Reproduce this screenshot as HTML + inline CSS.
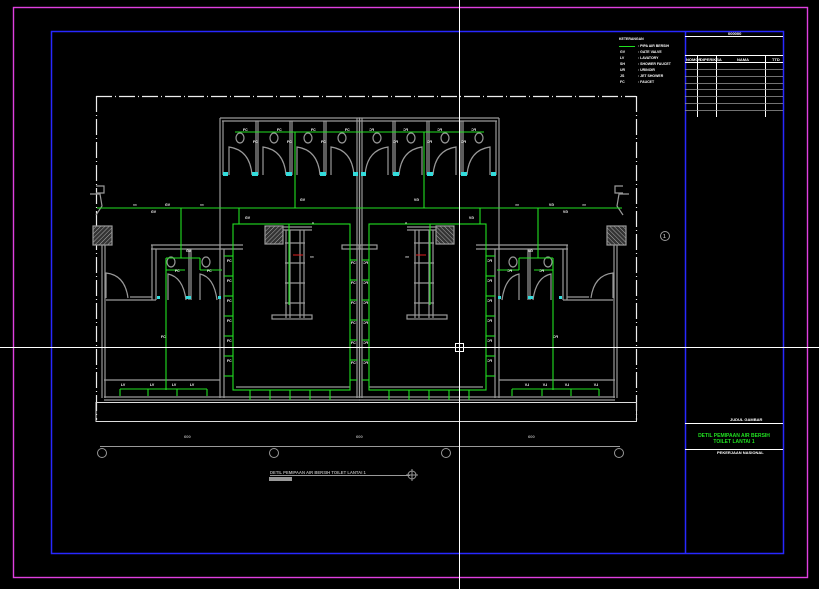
<!DOCTYPE html>
<html><head><meta charset="utf-8"><style>
html,body{margin:0;padding:0;background:#000;width:819px;height:589px;overflow:hidden}
svg{display:block}
text{font-family:"Liberation Sans",sans-serif;font-weight:bold}
</style></head><body>
<svg width="819" height="589" viewBox="0 0 819 589" xmlns="http://www.w3.org/2000/svg">
<defs>
<pattern id="hat" width="3" height="3" patternUnits="userSpaceOnUse" patternTransform="rotate(45)">
<rect width="3" height="3" fill="#333"/><line x1="0" y1="0" x2="0" y2="3" stroke="#aaa" stroke-width="1"/>
</pattern>
</defs>
<rect width="819" height="589" fill="#000"/>
<rect x="13.5" y="7.5" width="794" height="570" fill="none" stroke="#e040e0" stroke-width="1.4"/>
<rect x="51.5" y="31.5" width="732" height="522" fill="none" stroke="#2828ff" stroke-width="1.5"/>
<line x1="685.5" y1="31" x2="685.5" y2="553" stroke="#2828ff" stroke-width="1.5"/>

<g stroke="#fff" stroke-width="1">
<line x1="685" y1="36.5" x2="783" y2="36.5"/>
<line x1="685" y1="55.5" x2="783" y2="55.5"/>
<line x1="685" y1="62.5" x2="783" y2="62.5"/>
<line x1="697.5" y1="55" x2="697.5" y2="117"/>
<line x1="716.5" y1="55" x2="716.5" y2="117"/>
<line x1="765.5" y1="55" x2="765.5" y2="117"/>
<line x1="685" y1="423.5" x2="783" y2="423.5"/>
<line x1="685" y1="449.5" x2="783" y2="449.5"/>
</g>
<g stroke="#999" stroke-width="0.8">
<line x1="685" y1="69.5" x2="783" y2="69.5"/><line x1="685" y1="76.5" x2="783" y2="76.5"/>
<line x1="685" y1="83.5" x2="783" y2="83.5"/><line x1="685" y1="89.5" x2="783" y2="89.5"/>
<line x1="685" y1="96.5" x2="783" y2="96.5"/><line x1="685" y1="103.5" x2="783" y2="103.5"/>
<line x1="685" y1="110.5" x2="783" y2="110.5"/>
</g>
<g fill="#fff" font-size="4">
<text x="728" y="35">000000</text>
<text x="686" y="61">NOMOR</text><text x="700" y="61">DIPERIKSA</text><text x="737" y="61">NAMA</text><text x="772" y="61">TTD</text>
<text x="730" y="421">JUDUL GAMBAR</text>
<text x="717" y="454">PEKERJAAN NASIONAL</text>
</g>
<g fill="#20e020" font-size="5" font-weight="normal">
<text x="734" y="437" text-anchor="middle">DETIL PEMIPAAN AIR BERSIH</text>
<text x="734" y="443" text-anchor="middle">TOILET LANTAI 1</text>
</g>
<g fill="#fff" font-size="3.5">
<text x="619" y="40">KETERANGAN</text>
<line x1="619" y1="46.5" x2="635" y2="46.5" stroke="#20e020" stroke-width="1"/>
<text x="638" y="47">:  PIPA AIR BERSIH</text>
<text x="620" y="53">GV</text><text x="638" y="53">:  GATE VALVE</text>
<text x="620" y="59">LV</text><text x="638" y="59">:  LAVATORY</text>
<text x="620" y="65">SH</text><text x="638" y="65">:  SHOWER FAUCET</text>
<text x="620" y="71">UR</text><text x="638" y="71">:  URINOIR</text>
<text x="620" y="77">JS</text><text x="638" y="77">:  JET SHOWER</text>
<text x="620" y="83">FC</text><text x="638" y="83">:  FAUCET</text>
</g>

<g fill="none" stroke="#eee" stroke-width="1.2" stroke-dasharray="16,3,1,3">
<line x1="96" y1="96.5" x2="636" y2="96.5"/>
<line x1="96.5" y1="96" x2="96.5" y2="420"/>
<line x1="636.5" y1="96" x2="636.5" y2="420"/>
</g>
<g stroke="#ddd" stroke-width="1" fill="none">
<line x1="96" y1="402.5" x2="636" y2="402.5"/>
<line x1="96" y1="421.5" x2="636" y2="421.5"/>
<line x1="96" y1="402" x2="96" y2="422"/><line x1="636.5" y1="402" x2="636.5" y2="422"/>
</g>

<defs>
<g id="half">
 <g stroke="#999" stroke-width="1.2" fill="none">
  <line x1="220" y1="118" x2="360" y2="118"/><line x1="222" y1="121" x2="360" y2="121"/>
  <line x1="220" y1="118" x2="220" y2="250"/><line x1="223" y1="121" x2="223" y2="175"/>
  <line x1="256" y1="121" x2="256" y2="175"/><line x1="258" y1="121" x2="258" y2="175"/>
  <line x1="290" y1="121" x2="290" y2="175"/><line x1="292" y1="121" x2="292" y2="175"/>
  <line x1="324" y1="121" x2="324" y2="175"/><line x1="326" y1="121" x2="326" y2="175"/>
  <line x1="357" y1="118" x2="357" y2="398"/><line x1="359.5" y1="118" x2="359.5" y2="398"/>
  <path d="M229 175 L229 147 Q250 150 252 175"/><path d="M263 175 L263 147 Q284 150 286 175"/>
  <path d="M297 175 L297 147 Q318 150 320 175"/><path d="M331 175 L331 147 Q352 150 354 175"/>
  <ellipse cx="240" cy="138" rx="4" ry="5"/><ellipse cx="274" cy="138" rx="4" ry="5"/>
  <ellipse cx="308" cy="138" rx="4" ry="5"/><ellipse cx="342" cy="138" rx="4" ry="5"/>
  <rect x="93" y="226" width="19" height="19" fill="url(#hat)" stroke="#999"/>
  <line x1="102" y1="245" x2="102" y2="398"/><line x1="105" y1="245" x2="105" y2="398"/>
  <path d="M96 186 L104 186 L104 193 L96 193"/><path d="M90 194 L100 194 L102 206 L96 215"/>
  <line x1="151" y1="245" x2="243" y2="245"/><line x1="151" y1="249" x2="243" y2="249"/>
  <line x1="152" y1="245" x2="152" y2="300"/><line x1="156" y1="249" x2="156" y2="300"/>
  <line x1="106" y1="300" x2="156" y2="300"/><line x1="130" y1="297" x2="152" y2="297"/>
  <path d="M106 298 L106 273 Q125 275 128 298"/>
  <line x1="189" y1="249" x2="189" y2="300"/><line x1="191" y1="249" x2="191" y2="300"/>
  <path d="M168 300 L168 274 Q183 277 186 300"/><path d="M200 300 L200 274 Q214 277 217 300"/>
  <ellipse cx="171" cy="262" rx="4" ry="5"/><ellipse cx="206" cy="262" rx="4" ry="5"/>
  <line x1="104" y1="380" x2="220" y2="380"/>
  <line x1="220" y1="245" x2="220" y2="398"/><line x1="224" y1="249" x2="224" y2="398"/>
  <line x1="104" y1="397" x2="360" y2="397"/><line x1="104" y1="400" x2="360" y2="400"/>
  <rect x="265" y="226" width="18" height="18" fill="url(#hat)"/>
  <line x1="283" y1="227" x2="312" y2="227"/><line x1="283" y1="230" x2="312" y2="230"/>
  <line x1="286" y1="230" x2="286" y2="318"/><line x1="290" y1="230" x2="290" y2="318"/>
  <line x1="300" y1="230" x2="300" y2="318"/><line x1="304" y1="230" x2="304" y2="318"/>
  <rect x="272" y="315" width="40" height="4"/>
  <line x1="285" y1="243" x2="305" y2="243"/><line x1="285" y1="263" x2="305" y2="263"/>
  <line x1="285" y1="283" x2="305" y2="283"/><line x1="285" y1="303" x2="305" y2="303"/>
  <rect x="342" y="245" width="18" height="4"/>
  <line x1="236" y1="387" x2="350" y2="387"/>
 </g>
 <g stroke="#22e022" stroke-width="1.1" fill="none">
  <line x1="235" y1="132" x2="360" y2="132"/>
  <line x1="295" y1="132" x2="295" y2="208"/>
  <line x1="97" y1="208" x2="360" y2="208"/>
  <line x1="181" y1="208" x2="181" y2="258"/>
  <line x1="166" y1="258" x2="200" y2="258"/><line x1="166" y1="258" x2="166" y2="390"/>
  <line x1="166" y1="270" x2="185" y2="270"/><line x1="200" y1="258" x2="200" y2="270"/><line x1="200" y1="270" x2="222" y2="270"/>
  <line x1="120" y1="389" x2="207" y2="389"/>
  <line x1="120" y1="389" x2="120" y2="396"/><line x1="148" y1="389" x2="148" y2="396"/>
  <line x1="177" y1="389" x2="177" y2="396"/><line x1="207" y1="389" x2="207" y2="396"/>
  <line x1="239" y1="208" x2="239" y2="224"/>
  <rect x="233" y="224" width="117" height="166"/>
  <line x1="289" y1="224" x2="289" y2="305"/>
  <line x1="224" y1="256" x2="233" y2="256"/><line x1="224" y1="276" x2="233" y2="276"/>
  <line x1="224" y1="296" x2="233" y2="296"/><line x1="224" y1="316" x2="233" y2="316"/>
  <line x1="224" y1="336" x2="233" y2="336"/><line x1="224" y1="356" x2="233" y2="356"/>
  <line x1="224" y1="376" x2="233" y2="376"/>
  <line x1="350" y1="260" x2="357" y2="260"/><line x1="350" y1="280" x2="357" y2="280"/>
  <line x1="350" y1="300" x2="357" y2="300"/><line x1="350" y1="320" x2="357" y2="320"/>
  <line x1="350" y1="340" x2="357" y2="340"/><line x1="350" y1="360" x2="357" y2="360"/>
  <line x1="350" y1="380" x2="357" y2="380"/>
  <line x1="250" y1="390" x2="250" y2="400"/><line x1="270" y1="390" x2="270" y2="400"/>
  <line x1="290" y1="390" x2="290" y2="400"/><line x1="310" y1="390" x2="310" y2="400"/>
  <line x1="330" y1="390" x2="330" y2="400"/>
 </g>
 <path d="M293 255 L303 255" stroke="#e02020" stroke-width="1"/>
 <g fill="#fff" font-size="3.5">
  <text x="133" y="206">≈≈</text><text x="165" y="206">GV</text><text x="200" y="206">≈≈</text>
  <text x="151" y="213">GV</text><text x="300" y="201">GV</text><text x="245" y="219">GV</text>
  <text x="312" y="224">≈</text><text x="310" y="258">≈≈</text>
  <text x="227" y="262">FC</text><text x="227" y="282">FC</text><text x="227" y="302">FC</text>
  <text x="227" y="322">FC</text><text x="227" y="342">FC</text><text x="227" y="362">FC</text>
  <text x="351" y="264">FC</text><text x="351" y="284">FC</text><text x="351" y="304">FC</text>
  <text x="351" y="324">FC</text><text x="351" y="344">FC</text><text x="351" y="364">FC</text>
  <text x="161" y="338">FC</text>
  <text x="121" y="386">LV</text><text x="150" y="386">LV</text><text x="172" y="386">LV</text><text x="190" y="386">LV</text>
  <text x="243" y="131">FC</text><text x="277" y="131">FC</text><text x="311" y="131">FC</text><text x="345" y="131">FC</text>
  <text x="253" y="143">FC</text><text x="287" y="143">FC</text><text x="321" y="143">FC</text>
  <text x="186" y="252">GV</text><text x="175" y="272">FC</text><text x="207" y="272">FC</text>
 </g>
 <g fill="#3dd">
  <rect x="223" y="172" width="5" height="4"/><rect x="252" y="172" width="6" height="4"/>
  <rect x="286" y="172" width="6" height="4"/><rect x="320" y="172" width="6" height="4"/>
  <rect x="353" y="172" width="5" height="4"/><rect x="157" y="296" width="3" height="3"/>
  <rect x="186" y="296" width="5" height="3"/><rect x="218" y="296" width="3" height="3"/>
 </g>
</g>
</defs>
<use href="#half"/>
<use href="#half" transform="translate(719,0) scale(-1,1)"/>

<g stroke="#999" stroke-width="1" fill="none">
<line x1="100" y1="446.5" x2="620" y2="446.5"/>
<circle cx="102" cy="453" r="4.5"/><circle cx="274" cy="453" r="4.5"/>
<circle cx="446" cy="453" r="4.5"/><circle cx="619" cy="453" r="4.5"/>
<circle cx="665" cy="236" r="4.5"/>
<line x1="270" y1="475.5" x2="410" y2="475.5"/>
<circle cx="412" cy="475" r="4"/><line x1="412" y1="469" x2="412" y2="481"/><line x1="406" y1="475" x2="418" y2="475"/>
</g>
<g fill="#aaa" font-size="4">
<text x="184" y="438">600</text><text x="356" y="438">600</text><text x="528" y="438">600</text>
<text x="663" y="238" font-size="5">1</text>
<text x="270" y="474" font-size="4.2">DETIL PEMIPAAN AIR BERSIH TOILET LANTAI 1</text>
</g>
<rect x="269" y="477" width="23" height="4" fill="#999"/>

<line x1="459.5" y1="0" x2="459.5" y2="589" stroke="#fff" stroke-width="1"/>
<line x1="0" y1="347.5" x2="819" y2="347.5" stroke="#fff" stroke-width="1"/>
<rect x="455.5" y="343.5" width="8" height="8" fill="none" stroke="#fff" stroke-width="1"/>
</svg>
</body></html>
